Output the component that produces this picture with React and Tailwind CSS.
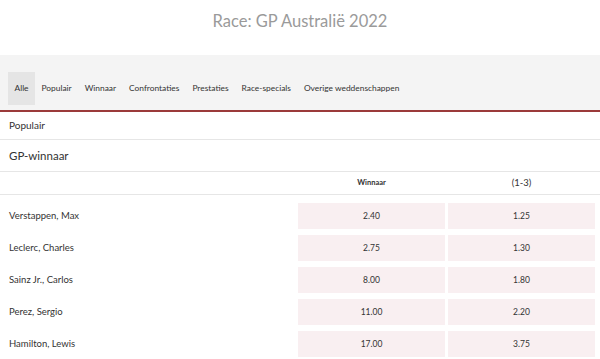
export default function App() {
  const tabs = ["Alle", "Populair", "Winnaar", "Confrontaties", "Prestaties", "Race-specials", "Overige weddenschappen"];
  const rows = [
    ["Verstappen, Max", "2.40", "1.25"],
    ["Leclerc, Charles", "2.75", "1.30"],
    ["Sainz Jr., Carlos", "8.00", "1.80"],
    ["Perez, Sergio", "11.00", "2.20"],
    ["Hamilton, Lewis", "17.00", "3.75"],
  ];
  return (
    <div className="w-[600px] h-[359px] overflow-hidden bg-white text-[#333]" style={{ fontFamily: 'Lato, sans-serif' }}>
      <div className="h-[55px] flex justify-center pt-[11px]">
        <h1 className="text-[16.5px] text-[#9a9a9a] leading-[20px]">Race: GP Australië 2022</h1>
      </div>
      <div className="h-[57px] bg-[#f4f4f4] border-b-2 border-[#9b3a3a] flex items-end pb-[5px] pl-[8px]">
        <div className="flex items-stretch h-[33px] text-[8.4px] text-[#333]">
          {tabs.map((t, i) => (
            <div key={t} className={`flex items-center px-[6.5px] ${i === 0 ? "bg-[#e5e5e5]" : ""}`}>{t}</div>
          ))}
        </div>
      </div>
      <div className="h-[28px] border-b border-[#e6e6e6] flex items-center pl-[9px] text-[10px]">Populair</div>
      <div className="h-[32px] border-b border-[#e6e6e6] flex items-center pl-[9px] text-[11.5px]">GP-winnaar</div>
      <div className="h-[23px] border-b border-[#e6e6e6] flex items-center pr-[5px]">
        <div className="flex-1" />
        <div className="w-[147px] text-center font-bold text-[7.5px]">Winnaar</div>
        <div className="w-[3px]" />
        <div className="w-[147px] text-center text-[9.5px]">(1-3)</div>
      </div>
      <div className="flex flex-col gap-[6px] pt-[8px]">
        {rows.map(([n, a, b]) => (
          <div key={n} className="h-[26px] flex items-center pr-[5px]">
            <div className="flex-1 pl-[9px] text-[9.5px]">{n}</div>
            <div className="w-[147px] h-full bg-[#f9eff1] flex items-center justify-center text-[8.5px]">{a}</div>
            <div className="w-[3px]" />
            <div className="w-[147px] h-full bg-[#f9eff1] flex items-center justify-center text-[8.5px]">{b}</div>
          </div>
        ))}
      </div>
    </div>
  );
}
